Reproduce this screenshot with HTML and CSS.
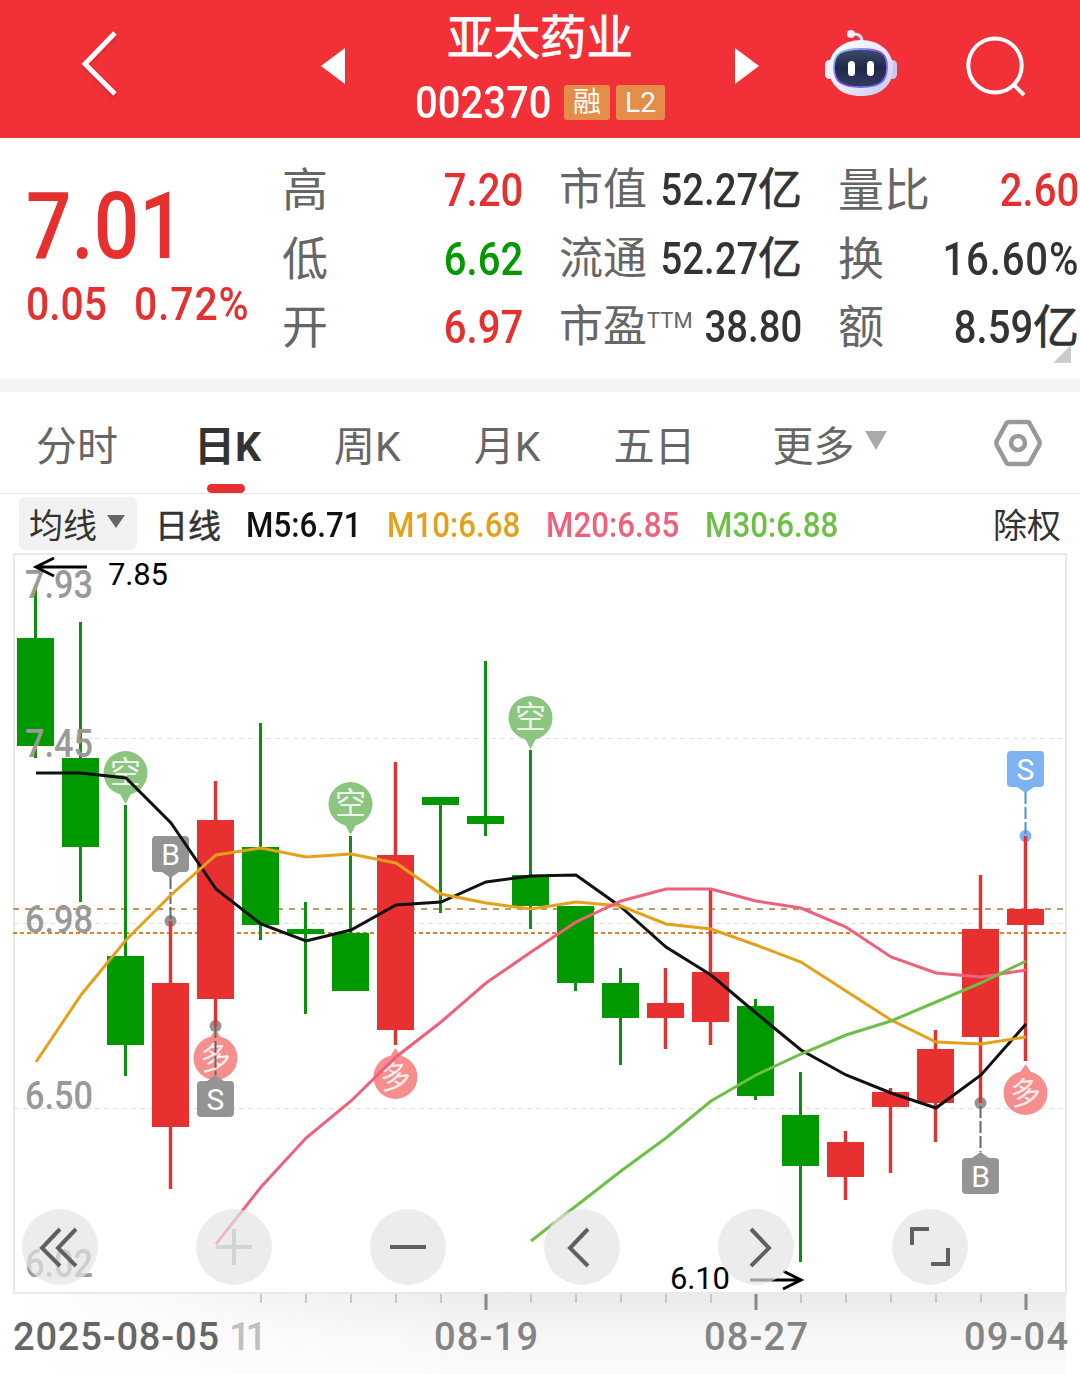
FILE: index.html
```html
<!DOCTYPE html>
<html lang="zh-CN">
<head>
<meta charset="UTF-8" />
<meta name="viewport" content="width=device-width, initial-scale=1" />
<title>亚太药业 002370</title>
<link rel="stylesheet" href="styles.css">
</head>
<body>
  <header class="topbar">
    <svg class="back" width="38" height="68" viewBox="0 0 38 68"><path d="M34 3 4 34 34 64" fill="none" stroke="#fff" stroke-width="5"/></svg>
    <svg class="prev" width="24" height="36" viewBox="0 0 24 36"><path d="M0 18 24 0V36Z" fill="#fff"/></svg>
    <div class="stock">
      <h1>亚太药业</h1>
      <div class="code-row">
        <span class="num code">002370</span>
        <span class="badge">融</span>
        <span class="badge badge-l2">L2</span>
      </div>
    </div>
    <svg class="next" width="24" height="36" viewBox="0 0 24 36"><path d="M24 18 0 0V36Z" fill="#fff"/></svg>
    <svg class="robot" width="72" height="70" viewBox="0 0 72 70">
      <defs>
        <linearGradient id="shell" x1="0" y1="0" x2="1" y2="1"><stop offset="0" stop-color="#fff"/><stop offset=".55" stop-color="#e9e8fb"/><stop offset="1" stop-color="#c5c6ee"/></linearGradient>
        <linearGradient id="rim" x1="0" y1="0" x2="1" y2="1"><stop offset="0" stop-color="#7fdcf5"/><stop offset=".5" stop-color="#8a48e8"/><stop offset="1" stop-color="#6f7df0"/></linearGradient>
        <linearGradient id="visor" x1="0" y1="0" x2="0" y2="1"><stop offset="0" stop-color="#414a6b"/><stop offset=".5" stop-color="#1e2849"/><stop offset="1" stop-color="#343b62"/></linearGradient>
      </defs>
      <path d="M27 5Q37 4 37 13" fill="none" stroke="#e6e3f7" stroke-width="3"/>
      <circle cx="26" cy="5" r="4" fill="#f1effc"/>
      <rect x="0" y="31" width="9" height="19" rx="4.5" fill="#f0effc"/>
      <rect x="63" y="31" width="9" height="19" rx="4.5" fill="#c9c9ef"/>
      <path d="M36 11C54 11 68 22 68 39 68 57 55 67 36 67S4 57 4 39C4 22 18 11 36 11Z" fill="url(#shell)"/>
      <path d="M36 20C55 20 62 24 62 38 62 53 55 58 36 58S9 53 9 38C9 24 17 20 36 20Z" fill="url(#visor)" stroke="url(#rim)" stroke-width="1.8"/>
      <rect x="23" y="32" width="7" height="15" rx="3.5" fill="#fff"/>
      <rect x="42" y="32" width="7" height="15" rx="3.5" fill="#fff"/>
    </svg>
    <svg class="search" width="62" height="62" viewBox="0 0 62 62"><ellipse cx="29" cy="29.5" rx="26.7" ry="27" fill="none" stroke="#fff" stroke-width="4"/><path d="M47 48 58 59" stroke="#fff" stroke-width="4"/></svg>
  </header>

  <section class="quote">
    <div class="price-box">
      <div class="num price">7.01</div>
      <div class="change"><span class="num">0.05</span><span class="num percent">0.72%</span></div>
    </div>
    <dl class="col col-a">
      <dt>高</dt><dd class="up"><span class="num">7.20</span></dd>
      <dt>低</dt><dd class="down"><span class="num">6.62</span></dd>
      <dt>开</dt><dd class="up"><span class="num">6.97</span></dd>
    </dl>
    <dl class="col col-b">
      <dt>市值</dt><dd><span class="num">52.27</span>亿</dd>
      <dt>流通</dt><dd><span class="num">52.27</span>亿</dd>
      <dt>市盈<sup>TTM</sup></dt><dd><span class="num">38.80</span></dd>
    </dl>
    <dl class="col col-c">
      <dt>量比</dt><dd class="up"><span class="num">2.60</span></dd>
      <dt>换</dt><dd><span class="num percent">16.60%</span></dd>
      <dt>额</dt><dd><span class="num">8.59</span>亿</dd>
    </dl>
    <i class="corner"></i>
  </section>

  <nav class="tabs">
    <a class="tab">分时</a>
    <a class="tab active">日K</a>
    <a class="tab">周K</a>
    <a class="tab">月K</a>
    <a class="tab">五日</a>
    <a class="tab more">更多<i class="caret"></i></a>
    <svg class="settings" width="48" height="48" viewBox="0 0 48 48" fill="none" stroke="#999"><path d="M15 3H33Q35 3 36 5L45.300 22Q46 24 45.300 26L36 43Q35 45 33 45H15Q13 45 12 43L2.700 26Q2 24 2.700 22L12 5Q13 3 15 3Z" stroke-width="4.500"/><circle cx="24" cy="24" r="7" stroke-width="4.500"/></svg>
  </nav>

  <div class="legend">
    <button class="ma-select">均线<i class="caret"></i></button>
    <span class="period">日线</span>
    <span class="ma m5"><span class="num">M5:6.71</span></span>
    <span class="ma m10"><span class="num">M10:6.68</span></span>
    <span class="ma m20"><span class="num">M20:6.85</span></span>
    <span class="ma m30"><span class="num">M30:6.88</span></span>
    <span class="adjust">除权</span>
  </div>

  <main class="chart">
    <svg class="kline" width="1080" height="821" viewBox="0 553 1080 821">
      <defs>
        <linearGradient id="axis" x1="0" y1="0" x2="0" y2="1"><stop offset="0" stop-color="#ebebeb"/><stop offset=".5" stop-color="#f6f6f6"/><stop offset="1" stop-color="#fafafa"/></linearGradient>
        <linearGradient id="fade" x1="0" y1="0" x2="1" y2="0"><stop offset="0" stop-color="#fff"/><stop offset="1" stop-color="#fff" stop-opacity="0"/></linearGradient>
        <g id="short">
          <path d="M-7 18 0 31 7 18Z"/><circle r="22"/>
          <text class="pin-text" y="10">空</text>
        </g>
        <g id="long">
          <path d="M-7 -18 0 -29 7 -18Z"/><circle r="22"/>
          <text class="pin-text" y="11" transform="rotate(-6)">多</text>
        </g>
      </defs>

      <!-- date axis background -->
      <rect x="14" y="1294" width="1052" height="80" fill="url(#axis)"/>
      <rect x="14" y="1294" width="480" height="80" fill="url(#fade)"/>

      <!-- frame and grid -->
      <rect class="frame" x="14" y="554" width="1052" height="739"/>
      <path class="grid" d="M14 738.500H1066M14 923.500H1066M14 1108.500H1066"/>
      <path class="ref-line" d="M13 909H1066"/>
      <path class="cost-line" d="M13 933H1066"/>

      <!-- candles -->
      <path class="wick green" d="M35.500 585V758M80.500 622V902M125.500 805V1076M260.500 723V940M305.500 902V1014M350.500 836V991M440.500 797V913M485.500 661V836M530.500 750V929M575.500 906V991M620.500 968V1065M755.500 999V1100M800.500 1072V1262"/>
      <path class="body green" d="M17 638h37v108h-37zM62 758h37v89h-37zM107 956h37v89h-37zM242 847h37v78h-37zM287 929h37v5h-37zM332 933h37v58h-37zM422 797h37v8h-37zM467 816h37v8h-37zM512 875h37v31h-37zM557 906h37v77h-37zM602 983h37v35h-37zM737 1006h37v90h-37zM782 1115h37v51h-37z"/>

      <g class="dots">
        <circle cx="170.500" cy="921" r="6"/><circle cx="215.500" cy="1026" r="6"/><circle cx="980.500" cy="1103" r="6"/>
        <circle class="blue" cx="1025.500" cy="836" r="6"/>
      </g>
      <path class="wick red" d="M170.500 921V1189M215.500 781V1026M395.500 762V1045M665.500 968V1049M710.500 889V1045M845.500 1131V1200M890.500 1088V1173M935.500 1030V1142M980.500 875V1103M1025.500 836V1061"/>
      <path class="body red" d="M152 983h37v144h-37zM197 820h37v179h-37zM377 855h37v175h-37zM647 1003h37v15h-37zM692 972h37v50h-37zM827 1142h37v35h-37zM872 1092h37v15h-37zM917 1049h37v54h-37zM962 929h37v108h-37zM1007 909h37v16h-37z"/>

      <!-- long / short signals -->
      <g class="short"><use href="#short" x="125.500" y="773"/><use href="#short" x="350.500" y="804"/><use href="#short" x="530.500" y="718"/></g>
      <g class="long"><use href="#long" x="215.500" y="1058"/><use href="#long" x="395.500" y="1077"/><use href="#long" x="1025.500" y="1093"/></g>

      <!-- buy / sell flags -->
      <path class="flag-line" d="M170.500 877V921M215.500 1026V1075M980.500 1106V1152"/>
      <path class="flag-line blue" d="M1025.500 792V836"/>
      <g class="flag">
        <rect x="152" y="836" width="37" height="36" rx="4"/><path d="M162 872h17l-8.500 6z"/><text x="170.500" y="865">B</text>
        <rect x="197" y="1081" width="37" height="36" rx="4"/><path d="M207 1081h17l-8.500 -6z"/><text x="215.500" y="1110">S</text>
        <rect x="962" y="1158" width="37" height="36" rx="4"/><path d="M972 1158h17l-8.500 -6z"/><text x="980.500" y="1187">B</text>
      </g>
      <g class="flag blue">
        <rect x="1007" y="751" width="37" height="36" rx="4"/><path d="M1017 787h17l-8.500 6z"/><text x="1025.500" y="780">S</text>
      </g>

      <!-- moving averages -->
      <polyline class="line m5" points="36,773 81,773 126,778 171,823 216,889 261,924 306,941 351,930 396,905 441,902 486,882 531,876 576,875 621,907 666,947 711,975 756,1013 801,1050 846,1075 891,1093 936,1108 981,1075 1026,1024"/>
      <polyline class="line m10" points="36,1062 81,995 126,940 171,895 216,855 261,848 306,857 351,854 396,863 441,894 486,903 531,909 576,902 621,906 666,924 711,929 756,945 801,962 846,991 891,1020 936,1042 981,1044 1026,1037"/>
      <polyline class="line m20" points="216,1244 261,1187 306,1138 351,1101 396,1057 441,1022 486,983 531,952 576,922 621,901 666,889 711,889 756,901 801,908 846,927 891,957 936,973 981,977 1026,970"/>
      <polyline class="line m30" points="531,1241 576,1206 621,1171 666,1138 711,1101 756,1075 801,1054 846,1035 891,1021 936,1002 981,983 1026,961"/>

      <!-- price labels -->
      <g class="price-label">
        <text x="25" y="598" textLength="68" lengthAdjust="spacingAndGlyphs">7.93</text>
        <text x="25" y="757" textLength="68" lengthAdjust="spacingAndGlyphs">7.45</text>
        <text x="25" y="933" textLength="68" lengthAdjust="spacingAndGlyphs">6.98</text>
        <text x="25" y="1109" textLength="68" lengthAdjust="spacingAndGlyphs">6.50</text>
        <text x="25" y="1277" textLength="68" lengthAdjust="spacingAndGlyphs">6.02</text>
      </g>
      <path class="arrow" d="M87 567H36M54 558 36 567 54 576M750 1280H801M783 1271 801 1280 783 1289"/>
      <text class="extreme" x="108" y="585" textLength="60">7.85</text>
      <text class="extreme" x="670" y="1289" textLength="60">6.10</text>

      <!-- date axis -->
      <path class="tick" d="M261 1294v9M306 1294v9M351 1294v9M396 1294v9M441 1294v9M531 1294v9M576 1294v9M621 1294v9M666 1294v9M711 1294v9M801 1294v9M846 1294v9M891 1294v9M936 1294v9M981 1294v9"/>
      <path class="tick-main" d="M486 1294v16M756 1294v16M1026 1294v16"/>
      <g class="date">
        <text class="first" x="13" y="1350" textLength="206">2025-08-05</text>
        <text class="faded" x="229" y="1350" textLength="38">11</text>
        <text x="434" y="1350" textLength="104">08-19</text>
        <text x="704" y="1350" textLength="104">08-27</text>
        <text x="964" y="1350" textLength="104">09-04</text>
      </g>
    </svg>

    <div class="controls">
      <button><svg viewBox="0 0 76 76"><path d="M38 20 20 39 38 57M54 20 36 39 54 57"/></svg></button>
      <button class="disabled"><svg viewBox="0 0 76 76"><path d="M20 38H56M38 20V56"/></svg></button>
      <button><svg viewBox="0 0 76 76"><path d="M20 38H56"/></svg></button>
      <button><svg viewBox="0 0 76 76"><path d="M44 20 26 39 44 57"/></svg></button>
      <button><svg viewBox="0 0 76 76"><path d="M33 20 51 39 33 57"/></svg></button>
      <button><svg viewBox="0 0 76 76"><path d="M20 36V20H37M39 55H56V39"/></svg></button>
    </div>
  </main>
</body>
</html>
```
FILE: styles.css
```css
* {
  box-sizing: border-box;
}

body {
  margin: 0;
  width: 1080px;
  height: 1374px;
  overflow: hidden;
  background: #fff;
  color: #333;
  font-family: Roboto, "Noto Sans CJK SC", sans-serif;
}

h1, dl, dt, dd {
  margin: 0;
  font-weight: 400;
}

svg {
  display: block;
  flex: none;
}

button {
  border: none;
  padding: 0;
  font: inherit;
  color: inherit;
}

/* narrow figures */
.num {
  display: inline-block;
  font-weight: 500;
  white-space: nowrap;
  transform: scaleX(0.87);
  transform-origin: right center;
  -webkit-text-stroke: 0;
}

.num.percent {
  letter-spacing: 1px;
}

/* Header */
.topbar {
  display: flex;
  height: 138px;
  background: #f23038;
  color: #fff;
}

.back {
  margin: 30px 202px 0 81px;
  filter: drop-shadow(0 1px 1px rgba(120, 0, 0, 0.4));
}

.prev,
.next {
  margin-top: 48px;
}

.stock {
  width: 250px;
  margin: 0 70px;
}

.stock h1 {
  height: 74px;
  line-height: 76px;
  font-size: 46.5px;
  text-align: center;
  -webkit-text-stroke: 0.8px #fff;
}

.code-row {
  display: flex;
  justify-content: flex-end;
  align-items: center;
  height: 56px;
}

.code {
  flex: none;
  font-size: 45px;
  margin-right: 13px;
  transform: scaleX(0.89);
}

.badge {
  flex: none;
  width: 46px;
  height: 35px;
  line-height: 35px;
  border-radius: 3px;
  background: #e38d48;
  font-size: 28px;
  text-align: center;
}

.badge-l2 {
  width: 49px;
  margin-left: 6px;
}

.robot {
  margin: 29px 69px 0 66px;
}

.search {
  margin-top: 36px;
}

/* Quote */
.quote {
  position: relative;
  display: flex;
  height: 254px;
  padding-top: 17px;
  border-bottom: 13px solid #f4f4f4;
}

.price-box {
  width: 282px;
  padding-left: 26px;
  color: #e63030;
}

.price-box .num {
  transform-origin: left center;
}

.price {
  height: 118px;
  line-height: 144px;
  font-size: 92px;
}

.change {
  display: flex;
  height: 60px;
  line-height: 62px;
  font-size: 47px;
}

.change .num:first-child {
  width: 108px;
}

.col {
  display: grid;
  grid-template-columns: auto 1fr;
  grid-auto-rows: 68.5px;
  line-height: 70px;
  font-size: 46px;
}

.col dt {
  color: #666;
  white-space: nowrap;
}

.col dd {
  display: flex;
  justify-content: flex-end;
  min-width: 0;
  -webkit-text-stroke: 0.7px #333;
}

.col-a {
  width: 241px;
}

.col-b {
  width: 243px;
  margin: 0 36px;
  font-size: 44px;
}

.col-b dd {
  margin-left: -60px;
}

.col-c {
  width: 241px;
}

.col sup {
  font-size: 22px;
  line-height: 0;
  vertical-align: 14px;
}

.col .up {
  color: #e63030;
}

.col .down {
  color: #009900;
}

.corner {
  position: absolute;
  right: 9px;
  bottom: 16px;
  border-left: 18px solid transparent;
  border-bottom: 18px solid #ccc;
}

/* Period tabs */
.tabs {
  display: flex;
  align-items: center;
  height: 102px;
  padding-left: 36px;
  border-bottom: 1px solid #e4e4e4;
  font-size: 41px;
  color: #666;
}

.tab {
  position: relative;
  display: flex;
  align-items: center;
  margin-right: 73px;
}

.tab:nth-child(1) {
  margin-right: 76px;
}

.tab.more {
  margin-left: 4px;
}

.tab.active {
  color: #333;
  font-weight: 700;
}

.tab.active::after {
  content: "";
  position: absolute;
  left: 13px;
  bottom: -20px;
  width: 38px;
  height: 9px;
  border-radius: 5px;
  background: #e63030;
}

.caret {
  border: 11px solid transparent;
  border-top: 19px solid #aaa;
  border-bottom: 0;
  margin: -4px 0 0 10px;
}

.settings {
  margin-left: auto;
  margin-right: 38px;
}

/* MA legend */
.legend {
  display: flex;
  align-items: center;
  height: 59px;
  padding: 0 19px;
  font-size: 34px;
}

.ma-select {
  display: flex;
  align-items: center;
  width: 118px;
  height: 53px;
  margin-right: 18px;
  padding-left: 10px;
  border-radius: 6px;
  background: #f1f1f1;
}

.ma-select .caret {
  border-width: 13px 9px 0;
  border-top-color: #666;
}

.period {
  width: 91px;
  font-size: 33px;
  -webkit-text-stroke: 0.5px #333;
}

.ma {
  width: 159px;
  padding-top: 3px;
  font-size: 35px;
}

.ma .num {
  transform: scaleX(0.895);
  transform-origin: left center;
}

.ma.m5 {
  width: 141px;
  color: #111;
}

.ma.m10 {
  color: #e5a01a;
}

.ma.m20 {
  color: #f0607a;
}

.ma.m30 {
  color: #6dc045;
}

.adjust {
  margin-left: auto;
}

/* Chart */
.chart {
  position: relative;
  height: 821px;
}

.frame {
  fill: none;
  stroke: #e9e9e9;
  stroke-width: 2;
}

.grid {
  stroke: #e0e0e0;
  stroke-dasharray: 5 4;
}

.ref-line {
  stroke: #c09a60;
  stroke-width: 2;
  stroke-dasharray: 6 6;
}

.cost-line {
  stroke: #db8030;
  stroke-width: 2;
  stroke-dasharray: 4 3;
}

.wick {
  stroke-width: 3;
}

.wick.green {
  stroke: #0c8f0f;
}

.wick.red {
  stroke: #d93636;
  stroke-width: 3.5;
}

.body.green {
  fill: #009900;
}

.body.red {
  fill: #e93030;
}

.dots {
  fill: #949494;
}

.dots .blue,
.flag.blue {
  fill: #7eb2f2;
}

.short {
  fill: #8bc580;
}

.long {
  fill: #f78e8e;
}

.pin-text {
  fill: rgba(255, 255, 255, 0.85);
  font-size: 31px;
  text-anchor: middle;
}

.flag {
  fill: #949494;
}

.flag text {
  fill: #fff;
  font-size: 30px;
  text-anchor: middle;
}

.flag-line {
  stroke: #666;
  stroke-width: 2;
  stroke-dasharray: 12 3;
}

.flag-line.blue {
  stroke: #4a90e2;
}

.line {
  fill: none;
  stroke-width: 3;
}

.line.m5 {
  stroke: #111;
}

.line.m10 {
  stroke: #e5a01a;
}

.line.m20 {
  stroke: #f0607a;
}

.line.m30 {
  stroke: #6dc045;
}

.price-label {
  fill: #999;
  font-size: 38px;
  font-weight: 500;
}

.arrow {
  fill: none;
  stroke: #000;
  stroke-width: 3;
}

.extreme {
  fill: #000;
  font-size: 31px;
}

.tick {
  stroke: #c8c8c8;
  stroke-width: 2;
}

.tick-main {
  stroke: #888;
  stroke-width: 3;
}

.date {
  fill: #848484;
  font-size: 38px;
  font-weight: 500;
}

.date .first {
  fill: #666;
}

.date .faded {
  fill: #c0c0c0;
}

/* Floating chart controls */
.controls {
  position: absolute;
  left: 22px;
  top: 656px;
  display: flex;
  gap: 98px;
}

.controls button {
  width: 76px;
  height: 76px;
  border-radius: 50%;
  background: rgba(228, 228, 228, 0.7);
}

.controls svg {
  fill: none;
  stroke: #606060;
  stroke-width: 4;
}

.controls .disabled svg {
  stroke: #d3d3d3;
}
```
